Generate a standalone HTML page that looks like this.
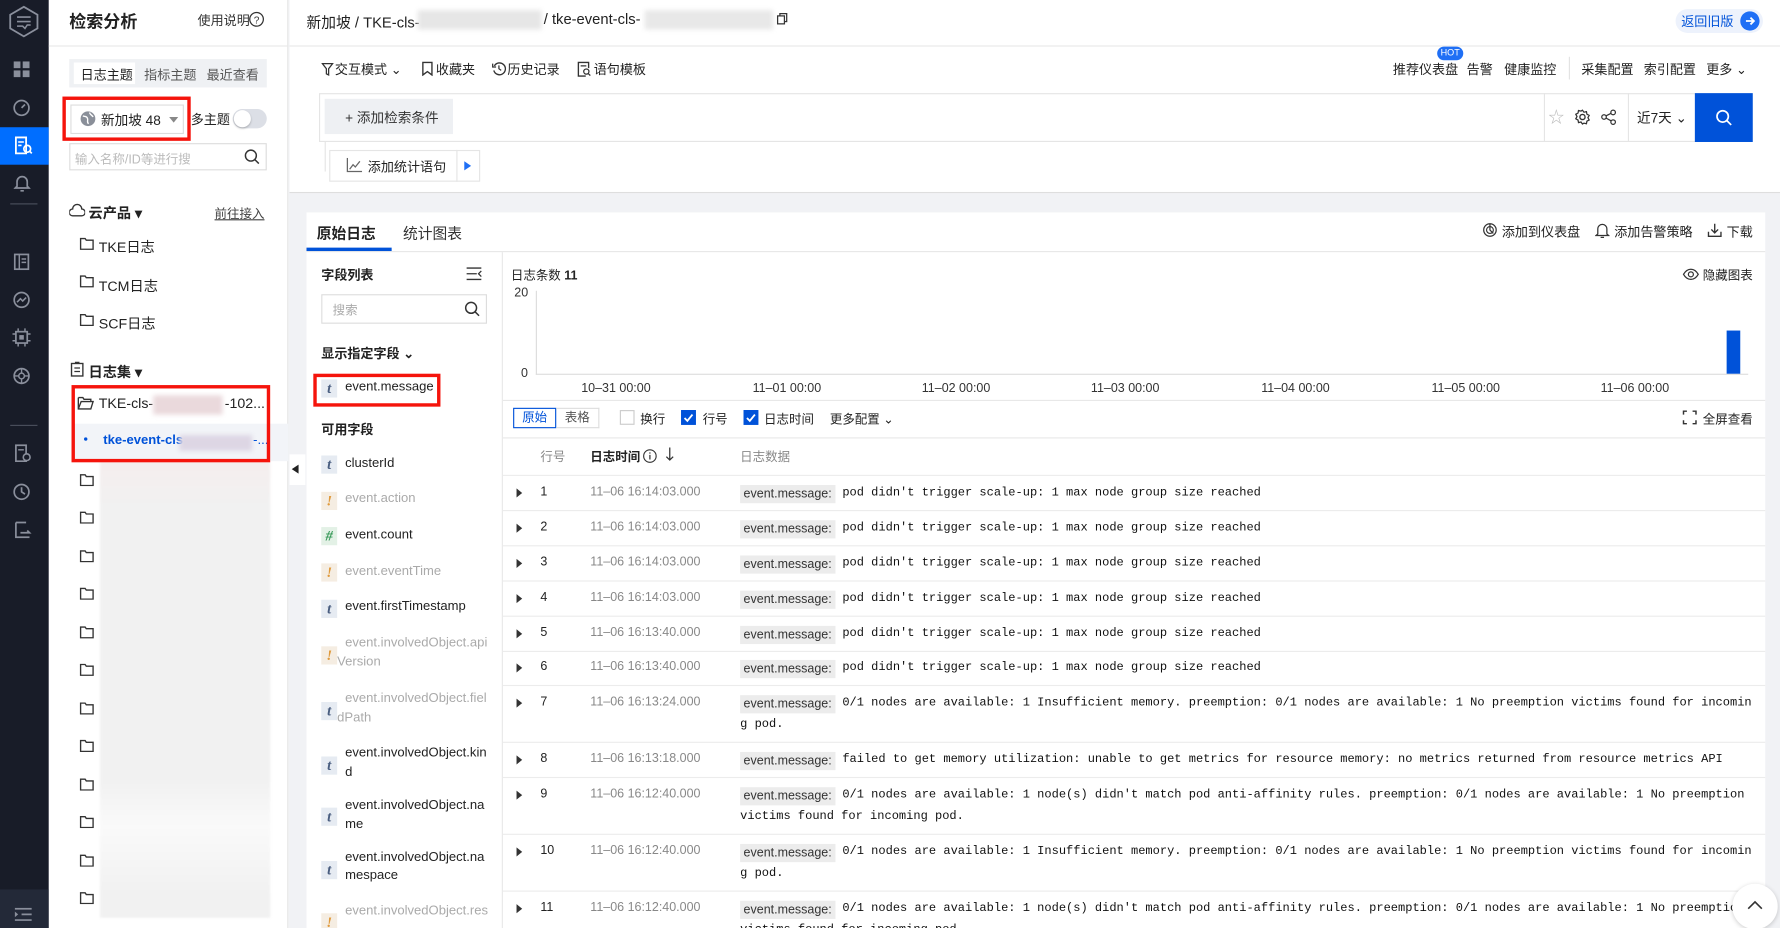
<!DOCTYPE html>
<html><head><meta charset="utf-8"><style>
*{box-sizing:border-box;margin:0;padding:0}
body{width:1780px;height:928px;overflow:hidden;background:#f1f2f5;font-family:"Liberation Sans","Noto Sans CJK SC",sans-serif;color:#222;font-size:12px}
#w{position:absolute;left:0;top:0;width:1568px;height:817px;transform:scale(1.1352,1.1359);transform-origin:0 0;background:#f1f2f5;overflow:hidden}
.a{position:absolute;white-space:nowrap}
.ic{position:absolute}
svg{display:block}
.nav{position:absolute;left:0;top:0;width:43px;height:817px;background:#181c28}
.side{position:absolute;left:43px;top:0;width:211px;height:817px;background:#fff;border-right:1px solid #e6e6e6}
.red{position:absolute;border:3px solid #f00f00;border-color:#f5140c}
.mono{font-family:"Liberation Mono",monospace;font-size:10.6px;color:#111}
.tag{position:absolute;background:#ececec;color:#333;font-size:11px;padding:1px 3px;line-height:14px}
.ft{position:absolute;width:14px;height:16px;background:#e6ebf2;color:#4a5e80;font-style:italic;font-weight:bold;font-family:"Liberation Serif",serif;font-size:13px;text-align:center;line-height:16px}
.row{position:absolute;left:443px;width:1112px;border-top:1px solid #ececec}
.tri{position:absolute;left:455px;width:0;height:0;border-left:5px solid #333;border-top:4px solid transparent;border-bottom:4px solid transparent}
.gray{color:#888}
.cb{position:absolute;width:13px;height:13px;border:1px solid #ccc;background:#fff}
.cb.on{background:#0052d9;border-color:#0052d9}
</style></head><body><div id="w">

<!-- NAV -->
<div class="nav">
 <svg class="ic" style="left:7px;top:4px" width="28" height="30" viewBox="0 0 28 30"><path d="M14 2L26 9V21L14 28L2 21V9Z" fill="none" stroke="#8a8f9c" stroke-width="1.6"/><path d="M8 11h12M8 15h12M8 19h5l2 2 2-3h3" stroke="#8a8f9c" stroke-width="1.4" fill="none"/></svg>
 <svg class="ic" style="left:12px;top:54px" width="14" height="14"><rect x="0" y="0" width="6" height="6" fill="#8a8f9c"/><rect x="8" y="0" width="6" height="6" fill="#8a8f9c"/><rect x="0" y="8" width="6" height="6" fill="#8a8f9c"/><rect x="8" y="8" width="6" height="6" fill="#8a8f9c"/></svg>
 <svg class="ic" style="left:11px;top:87px" width="16" height="16"><circle cx="8" cy="8" r="6.5" fill="none" stroke="#8a8f9c" stroke-width="1.5"/><path d="M8 8l3-3" stroke="#8a8f9c" stroke-width="1.5"/></svg>
 <div class="a" style="left:0;top:112px;width:43px;height:33px;background:#006eff"></div>
 <svg class="ic" style="left:12px;top:120px" width="18" height="17"><path d="M2 1h9v14H2z" fill="none" stroke="#fff" stroke-width="1.6"/><path d="M4 5h5M4 8h3" stroke="#fff" stroke-width="1.4"/><circle cx="12" cy="11" r="3" fill="none" stroke="#fff" stroke-width="1.5"/><path d="M14 13l2 2" stroke="#fff" stroke-width="1.5"/></svg>
 <svg class="ic" style="left:12px;top:153px" width="15" height="16"><path d="M3 11V7a4.5 4.5 0 019 0v4l1.5 1.5h-12z" fill="none" stroke="#8a8f9c" stroke-width="1.5"/><path d="M6 15h3" stroke="#8a8f9c" stroke-width="1.5"/></svg>
 <div class="a" style="left:9px;top:179px;width:24px;height:1px;background:#4a4f5c"></div>
 <svg class="ic" style="left:12px;top:223px" width="14" height="15"><rect x="1" y="1" width="12" height="13" fill="none" stroke="#8a8f9c" stroke-width="1.5"/><path d="M5 1v13M7 5h4M7 8h4" stroke="#8a8f9c" stroke-width="1.3"/></svg>
 <svg class="ic" style="left:11px;top:256px" width="16" height="16"><circle cx="8" cy="8" r="6.5" fill="none" stroke="#8a8f9c" stroke-width="1.5"/><path d="M4 10l3-3 2 2 3-3" stroke="#8a8f9c" stroke-width="1.4" fill="none"/></svg>
 <svg class="ic" style="left:11px;top:289px" width="16" height="16"><rect x="3" y="3" width="10" height="10" fill="none" stroke="#8a8f9c" stroke-width="1.5"/><rect x="6" y="6" width="4" height="4" fill="#8a8f9c"/><path d="M5 0v3M11 0v3M5 13v3M11 13v3M0 5h3M0 11h3M13 5h3M13 11h3" stroke="#8a8f9c" stroke-width="1.3"/></svg>
 <svg class="ic" style="left:11px;top:323px" width="16" height="16"><circle cx="8" cy="8" r="6.5" fill="none" stroke="#8a8f9c" stroke-width="1.5"/><circle cx="8" cy="8" r="2.5" fill="none" stroke="#8a8f9c" stroke-width="1.3"/><path d="M8 1.5v4M8 10.5v4M1.5 8h4M10.5 8h4" stroke="#8a8f9c" stroke-width="1.2"/></svg>
 <div class="a" style="left:9px;top:374px;width:24px;height:1px;background:#4a4f5c"></div>
 <svg class="ic" style="left:12px;top:391px" width="16" height="16"><path d="M2 1h9v14H2z" fill="none" stroke="#8a8f9c" stroke-width="1.5"/><path d="M4 5h5" stroke="#8a8f9c" stroke-width="1.3"/><circle cx="11.5" cy="11.5" r="3" fill="#181c28" stroke="#8a8f9c" stroke-width="1.4"/></svg>
 <svg class="ic" style="left:11px;top:425px" width="16" height="16"><circle cx="8" cy="8" r="6.5" fill="none" stroke="#8a8f9c" stroke-width="1.5"/><path d="M8 4v4l3 2" stroke="#8a8f9c" stroke-width="1.5" fill="none"/></svg>
 <svg class="ic" style="left:12px;top:459px" width="16" height="15"><path d="M2 1h9M2 1v13h12M6 10h8l-2-2" fill="none" stroke="#8a8f9c" stroke-width="1.5"/></svg>
 <div class="a" style="left:0;top:783px;width:43px;height:34px;background:#232938"></div>
 <svg class="ic" style="left:13px;top:799px" width="15" height="12"><path d="M0 1h15M6 6h9M0 11h15" stroke="#8a8f9c" stroke-width="1.5"/><path d="M0 3.5l3 2.5-3 2.5z" fill="#8a8f9c"/></svg>
</div>

<!-- SIDEBAR -->
<div class="side">
 <div class="a" style="left:18px;top:8px;font-size:15px;font-weight:bold">检索分析</div>
 <div class="a" style="left:131px;top:10px;font-size:11.5px;color:#333">使用说明</div>
 <svg class="ic" style="left:176px;top:10px" width="14" height="14"><circle cx="7" cy="7" r="6" fill="none" stroke="#333" stroke-width="1.1"/><text x="7" y="10.5" font-size="9" text-anchor="middle" fill="#333" font-family="Liberation Sans">?</text></svg>
 <div class="a" style="left:0;top:40px;width:211px;height:1px;background:#e8e8e8"></div>
 <div class="a" style="left:18px;top:52px;width:174px;height:25px;background:#eff1f4"></div>
 <div class="a" style="left:22px;top:55px;width:54px;height:19px;background:#fff"></div>
 <div class="a" style="left:28px;top:58px;font-size:11.5px">日志主题</div>
 <div class="a" style="left:84px;top:58px;font-size:11.5px;color:#555">指标主题</div>
 <div class="a" style="left:139px;top:58px;font-size:11.5px;color:#555">最近查看</div>
 <div class="a" style="left:19px;top:92px;width:100px;height:26px;border:1px solid #ddd"></div>
 <svg class="ic" style="left:27px;top:97px" width="15" height="15"><circle cx="7.5" cy="7.5" r="6.5" fill="#8a8f99"/><path d="M3 5c2 1 3 0 4 2s-1 3 1 5M9 2c0 2 2 2 3 4" stroke="#fff" stroke-width="1.2" fill="none"/></svg>
 <div class="a" style="left:46px;top:97px;font-size:12px">新加坡 48</div>
 <div class="a" style="left:106px;top:103px;border-top:5px solid #888;border-left:4px solid transparent;border-right:4px solid transparent"></div>
 <div class="a" style="left:125px;top:97px;font-size:11.5px">多主题</div>
 <div class="a" style="left:162px;top:96px;width:30px;height:17px;border-radius:9px;background:#dcdfe6"></div>
 <div class="a" style="left:163px;top:97px;width:15px;height:15px;border-radius:8px;background:#fff;box-shadow:0 1px 2px rgba(0,0,0,.25)"></div>
 <div class="a" style="left:18px;top:126px;width:174px;height:24px;border:1px solid #ddd"></div>
 <div class="a" style="left:23px;top:132px;font-size:11px;color:#bbb">输入名称/ID等进行搜</div>
 <svg class="ic" style="left:172px;top:131px" width="14" height="14"><circle cx="6" cy="6" r="4.8" fill="none" stroke="#333" stroke-width="1.3"/><path d="M9.5 9.5l3.5 3.5" stroke="#333" stroke-width="1.3"/></svg>
 <svg class="ic" style="left:18px;top:179px" width="14" height="12"><path d="M3 11h8a3 3 0 000-6 4 4 0 00-8 0 3 3 0 000 6z" fill="none" stroke="#333" stroke-width="1.2"/></svg>
 <div class="a" style="left:35px;top:177px;font-size:12.5px;font-weight:bold">云产品 ▾</div>
 <div class="a" style="left:146px;top:180px;font-size:11px;color:#444;text-decoration:underline">前往接入</div>
 <svg class="ic" style="left:27px;top:209px" width="13" height="11"><path d="M1 1h4l1 1.5h6v8H1z" fill="none" stroke="#333" stroke-width="1.2"/></svg>
 <div class="a" style="left:44px;top:207px;font-size:12.5px">TKE日志</div>
 <svg class="ic" style="left:27px;top:242px" width="13" height="11"><path d="M1 1h4l1 1.5h6v8H1z" fill="none" stroke="#333" stroke-width="1.2"/></svg>
 <div class="a" style="left:44px;top:241px;font-size:12.5px">TCM日志</div>
 <svg class="ic" style="left:27px;top:276px" width="13" height="11"><path d="M1 1h4l1 1.5h6v8H1z" fill="none" stroke="#333" stroke-width="1.2"/></svg>
 <div class="a" style="left:44px;top:274px;font-size:12.5px">SCF日志</div>
 <svg class="ic" style="left:19px;top:318px" width="12" height="14"><rect x="1" y="2" width="10" height="11" fill="none" stroke="#333" stroke-width="1.2"/><path d="M4 1h4M3.5 6h5M3.5 9h5" stroke="#333" stroke-width="1.1"/></svg>
 <div class="a" style="left:35px;top:317px;font-size:12.5px;font-weight:bold">日志集 ▾</div>
 <div class="a" style="left:21px;top:373px;width:190px;height:33px;background:#f2f4f8"></div>
 <svg class="ic" style="left:25px;top:349px" width="15" height="12"><path d="M1 1h4l1 1.5h6v2M1 1v10h11l2-6.5H3.5L1 11" fill="none" stroke="#333" stroke-width="1.2"/></svg>
 <div class="a" style="left:44px;top:348px;font-size:12.5px">TKE-cls-</div>
 <div class="a" style="left:92px;top:348px;width:61px;height:17px;background:#ead9dc;filter:blur(2px)"></div>
 <div class="a" style="left:155px;top:348px;font-size:12.5px">-102...</div>
 <div class="a" style="left:31px;top:385px;width:3px;height:3px;border-radius:2px;background:#0052d9"></div>
 <div class="a" style="left:48px;top:382px;font-size:11.5px;color:#0052d9;font-weight:bold">tke-event-cls</div>
 <div class="a" style="left:115px;top:383px;width:64px;height:14px;background:#ddd6e4;filter:blur(2px)"></div>
 <div class="a" style="left:180px;top:382px;font-size:11.5px;color:#0052d9">-...</div>
 <div class="a" style="left:20px;top:337px;width:175px;height:69px" ></div>
 <div class="a" style="left:45px;top:406px;width:150px;height:402px;background:linear-gradient(#f5eeee,#f1f1f1 10%,#f1f1f1 70%,#fafafa 80%,#f1f1f1 95%);filter:blur(1px)"></div>
 <svg class="ic" style="left:27px;top:417px" width="13" height="11"><path d="M1 1h4l1 1.5h6v8H1z" fill="none" stroke="#333" stroke-width="1.2"/></svg>
 <svg class="ic" style="left:27px;top:450px" width="13" height="11"><path d="M1 1h4l1 1.5h6v8H1z" fill="none" stroke="#333" stroke-width="1.2"/></svg>
 <svg class="ic" style="left:27px;top:484px" width="13" height="11"><path d="M1 1h4l1 1.5h6v8H1z" fill="none" stroke="#333" stroke-width="1.2"/></svg>
 <svg class="ic" style="left:27px;top:517px" width="13" height="11"><path d="M1 1h4l1 1.5h6v8H1z" fill="none" stroke="#333" stroke-width="1.2"/></svg>
 <svg class="ic" style="left:27px;top:551px" width="13" height="11"><path d="M1 1h4l1 1.5h6v8H1z" fill="none" stroke="#333" stroke-width="1.2"/></svg>
 <svg class="ic" style="left:27px;top:584px" width="13" height="11"><path d="M1 1h4l1 1.5h6v8H1z" fill="none" stroke="#333" stroke-width="1.2"/></svg>
 <svg class="ic" style="left:27px;top:618px" width="13" height="11"><path d="M1 1h4l1 1.5h6v8H1z" fill="none" stroke="#333" stroke-width="1.2"/></svg>
 <svg class="ic" style="left:27px;top:651px" width="13" height="11"><path d="M1 1h4l1 1.5h6v8H1z" fill="none" stroke="#333" stroke-width="1.2"/></svg>
 <svg class="ic" style="left:27px;top:685px" width="13" height="11"><path d="M1 1h4l1 1.5h6v8H1z" fill="none" stroke="#333" stroke-width="1.2"/></svg>
 <svg class="ic" style="left:27px;top:718px" width="13" height="11"><path d="M1 1h4l1 1.5h6v8H1z" fill="none" stroke="#333" stroke-width="1.2"/></svg>
 <svg class="ic" style="left:27px;top:752px" width="13" height="11"><path d="M1 1h4l1 1.5h6v8H1z" fill="none" stroke="#333" stroke-width="1.2"/></svg>
 <svg class="ic" style="left:27px;top:785px" width="13" height="11"><path d="M1 1h4l1 1.5h6v8H1z" fill="none" stroke="#333" stroke-width="1.2"/></svg>
</div>
<div class="red" style="left:55px;top:85px;width:113px;height:39px"></div>
<div class="red" style="left:63px;top:339px;width:175px;height:68px"></div>
<div class="a" style="left:255px;top:400px;width:14px;height:27px;background:#fff"></div>
<div class="a" style="left:257px;top:409px;border-right:6px solid #222;border-top:4px solid transparent;border-bottom:4px solid transparent"></div>

<!-- HEADER -->
<div class="a" style="left:255px;top:0;width:1313px;height:170px;background:#fff"></div>
<div class="a" style="left:255px;top:40px;width:1313px;height:1px;background:#e8e8e8"></div>
<div class="a" style="left:270px;top:9px;font-size:13px">新加坡 / TKE-cls-</div>
<div class="a" style="left:368px;top:9px;width:109px;height:17px;background:#e6e6e6;filter:blur(2px)"></div>
<div class="a" style="left:479px;top:9px;font-size:13px">/ tke-event-cls-</div>
<div class="a" style="left:568px;top:9px;width:113px;height:17px;background:#e8e8e8;filter:blur(2px)"></div>
<svg class="ic" style="left:684px;top:11px" width="10" height="11"><rect x="3" y="1" width="6" height="7" fill="none" stroke="#333" stroke-width="1.1"/><rect x="1" y="3" width="6" height="7" fill="#fff" stroke="#333" stroke-width="1.1"/></svg>
<div class="a" style="left:1476px;top:8px;width:77px;height:21px;border-radius:11px;background:#edf2fc"></div>
<div class="a" style="left:1481px;top:11px;font-size:11.5px;color:#0052d9">返回旧版</div>
<div class="a" style="left:1533px;top:10px;width:17px;height:17px;border-radius:9px;background:#1f6ff5"></div>
<svg class="ic" style="left:1536px;top:13px" width="11" height="11"><path d="M2 5.5h7M6 2.5l3 3-3 3" stroke="#fff" stroke-width="1.6" fill="none"/></svg>

<svg class="ic" style="left:283px;top:55px" width="11" height="12"><path d="M1 1h9L6.5 5.5V11L4.5 10V5.5z" fill="none" stroke="#333" stroke-width="1.1"/></svg>
<div class="a" style="left:295px;top:53px;font-size:11.5px">交互模式 ⌄</div>
<svg class="ic" style="left:371px;top:54px" width="11" height="13"><path d="M1.5 1h8v11l-4-3-4 3z" fill="none" stroke="#333" stroke-width="1.2"/></svg>
<div class="a" style="left:384px;top:53px;font-size:11.5px">收藏夹</div>
<svg class="ic" style="left:433px;top:54px" width="13" height="13"><path d="M2.5 4a5.2 5.2 0 11-.5 4" fill="none" stroke="#333" stroke-width="1.2"/><path d="M1 2v3h3M6.5 3.5v3l2 1.5" stroke="#333" stroke-width="1.1" fill="none"/></svg>
<div class="a" style="left:447px;top:53px;font-size:11.5px">历史记录</div>
<svg class="ic" style="left:508px;top:54px" width="13" height="14"><path d="M8 13H1.5V1h9v5" fill="none" stroke="#333" stroke-width="1.2"/><path d="M3.5 4h5" stroke="#333" stroke-width="1.1"/><circle cx="8.5" cy="9" r="2.3" fill="none" stroke="#333" stroke-width="1.1"/><path d="M10 10.5l2 2" stroke="#333" stroke-width="1.1"/></svg>
<div class="a" style="left:523px;top:53px;font-size:11.5px">语句模板</div>

<div class="a" style="left:1266px;top:41px;width:23px;height:12px;border-radius:6px;background:#1f6ff5;color:#fff;font-size:8px;text-align:center;line-height:12px">HOT</div>
<div class="a" style="left:1227px;top:53px;font-size:11.5px">推荐仪表盘</div>
<div class="a" style="left:1292px;top:53px;font-size:11.5px">告警</div>
<div class="a" style="left:1325px;top:53px;font-size:11.5px">健康监控</div>
<div class="a" style="left:1382px;top:50px;width:1px;height:20px;background:#e3e3e3"></div>
<div class="a" style="left:1393px;top:53px;font-size:11.5px">采集配置</div>
<div class="a" style="left:1448px;top:53px;font-size:11.5px">索引配置</div>
<div class="a" style="left:1503px;top:53px;font-size:11.5px">更多 ⌄</div>

<div class="a" style="left:281px;top:82px;width:1263px;height:43px;border:1px solid #e5e5e5"></div>
<div class="a" style="left:286px;top:87px;width:113px;height:31px;background:#eef0f3"></div>
<div class="a" style="left:304px;top:95px;font-size:12px;color:#333">+ 添加检索条件</div>
<div class="a" style="left:1360px;top:82px;width:1px;height:43px;background:#e5e5e5"></div>
<div class="a" style="left:1364px;top:93px;font-size:14px;color:#bbb">☆</div>
<svg class="ic" style="left:1387px;top:96px" width="14" height="14"><circle cx="7" cy="7" r="2.3" fill="none" stroke="#333" stroke-width="1.2"/><path d="M7 1l1.3 1.8 2.2-.5.4 2.2 2 1.1-1.1 2 1.1 2-2 1.1-.4 2.2-2.2-.5L7 13.2 5.7 11.4l-2.2.5-.4-2.2-2-1.1 1.1-2-1.1-2 2-1.1.4-2.2 2.2.5z" fill="none" stroke="#333" stroke-width="1.1"/></svg>
<svg class="ic" style="left:1410px;top:96px" width="14" height="14"><circle cx="11" cy="3" r="2" fill="none" stroke="#333" stroke-width="1.1"/><circle cx="3" cy="7" r="2" fill="none" stroke="#333" stroke-width="1.1"/><circle cx="11" cy="11.5" r="2" fill="none" stroke="#333" stroke-width="1.1"/><path d="M4.8 6l4.4-2.2M4.8 8l4.4 2.4" stroke="#333" stroke-width="1.1"/></svg>
<div class="a" style="left:1434px;top:82px;width:1px;height:43px;background:#e5e5e5"></div>
<div class="a" style="left:1442px;top:95px;font-size:12px">近7天 ⌄</div>
<div class="a" style="left:1493px;top:82px;width:51px;height:43px;background:#0052d9"></div>
<svg class="ic" style="left:1511px;top:96px" width="15" height="15"><circle cx="6.5" cy="6.5" r="5" fill="none" stroke="#fff" stroke-width="1.5"/><path d="M10 10l4 4" stroke="#fff" stroke-width="1.5"/></svg>

<div class="a" style="left:286px;top:125px;width:1px;height:26px;background:#e5e5e5"></div>
<div class="a" style="left:290px;top:132px;width:133px;height:28px;border:1px solid #e5e5e5"></div>
<div class="a" style="left:402px;top:132px;width:1px;height:28px;background:#e5e5e5"></div>
<svg class="ic" style="left:305px;top:139px" width="14" height="13"><path d="M1 0v12h13" stroke="#666" stroke-width="1.1" fill="none"/><path d="M3 10l3-4 2 2 4-5" stroke="#666" stroke-width="1.1" fill="none"/></svg>
<div class="a" style="left:324px;top:139px;font-size:11.5px">添加统计语句</div>
<div class="a" style="left:409px;top:142px;border-left:6px solid #1f6ff5;border-top:4px solid transparent;border-bottom:4px solid transparent"></div>
<div class="a" style="left:255px;top:169px;width:1313px;height:1px;background:#dedede"></div>

<!-- CARD -->
<div class="a" style="left:270px;top:187px;width:1285px;height:640px;background:#fff"></div>
<div class="a" style="left:279px;top:195px;font-size:13px;font-weight:bold">原始日志</div>
<div class="a" style="left:355px;top:195px;font-size:13px;color:#333">统计图表</div>
<div class="a" style="left:270px;top:221px;width:1285px;height:1px;background:#e8e8e8"></div>
<div class="a" style="left:270px;top:218px;width:75px;height:3px;background:#0052d9"></div>
<svg class="ic" style="left:1306px;top:196px" width="13" height="13"><circle cx="6.5" cy="6.5" r="5.5" fill="none" stroke="#333" stroke-width="1.1"/><path d="M6.5 1v5.5l3 3" stroke="#333" stroke-width="1.1" fill="none"/><circle cx="6.5" cy="6.5" r="3" fill="none" stroke="#333" stroke-width="1"/></svg>
<div class="a" style="left:1323px;top:196px;font-size:11.5px">添加到仪表盘</div>
<svg class="ic" style="left:1405px;top:195px" width="13" height="15"><path d="M2.5 11V6.5a4 4 0 018 0V11l1.5 1.3H1z" fill="none" stroke="#333" stroke-width="1.1"/><path d="M5 14h3" stroke="#333" stroke-width="1.1"/></svg>
<div class="a" style="left:1422px;top:196px;font-size:11.5px">添加告警策略</div>
<svg class="ic" style="left:1504px;top:196px" width="13" height="13"><path d="M6.5 1v8M3.5 6l3 3 3-3M1 8v4h11V8" stroke="#333" stroke-width="1.2" fill="none"/></svg>
<div class="a" style="left:1521px;top:196px;font-size:11.5px">下载</div>

<!-- field panel -->
<div class="a" style="left:442px;top:222px;width:1px;height:600px;background:#e8e8e8"></div>
<div class="a" style="left:283px;top:234px;font-size:11.5px;font-weight:bold">字段列表</div>
<svg class="ic" style="left:411px;top:235px" width="14" height="12"><path d="M0 1h13M0 6h9M0 11h13" stroke="#333" stroke-width="1.2"/><path d="M13 3.5l-2.5 2.5 2.5 2.5" stroke="#333" stroke-width="1.1" fill="none"/></svg>
<div class="a" style="left:283px;top:259px;width:146px;height:26px;border:1px solid #ddd"></div>
<div class="a" style="left:293px;top:265px;font-size:11px;color:#aaa">搜索</div>
<svg class="ic" style="left:409px;top:265px" width="14" height="14"><circle cx="6" cy="6" r="4.8" fill="none" stroke="#333" stroke-width="1.3"/><path d="M9.5 9.5l3.5 3.5" stroke="#333" stroke-width="1.3"/></svg>
<div class="a" style="left:283px;top:303px;font-size:11.5px;font-weight:bold">显示指定字段 ⌄</div>
<div class="ft" style="left:283px;top:334px">t</div>
<div class="a" style="left:304px;top:335px;font-size:11.5px">event.message</div>
<div class="red" style="left:276px;top:329px;width:112px;height:29px"></div>
<div class="a" style="left:283px;top:370px;font-size:11.5px;font-weight:bold">可用字段</div>

<div class="ft" style="left:283px;top:401px">t</div><div class="a" style="left:304px;top:402px;font-size:11.5px">clusterId</div>
<div class="ft" style="left:283px;top:433px;background:#f5ede2;color:#e09a3c">!</div><div class="a gray" style="left:304px;top:433px;font-size:11.5px;color:#aaa">event.action</div>
<div class="ft" style="left:283px;top:464px;background:#e3f1e6;color:#3a9a5a">#</div><div class="a" style="left:304px;top:465px;font-size:11.5px">event.count</div>
<div class="ft" style="left:283px;top:496px;background:#f5ede2;color:#e09a3c">!</div><div class="a" style="left:304px;top:497px;font-size:11.5px;color:#aaa">event.eventTime</div>
<div class="ft" style="left:283px;top:528px">t</div><div class="a" style="left:304px;top:528px;font-size:11.5px">event.firstTimestamp</div>
<div class="ft" style="left:283px;top:569px;background:#f5ede2;color:#e09a3c">!</div><div class="a" style="left:304px;top:560px;font-size:11.5px;color:#aaa">event.involvedObject.api</div><div class="a" style="left:297px;top:577px;font-size:11.5px;color:#aaa">Version</div>
<div class="ft" style="left:283px;top:618px">t</div><div class="a" style="left:304px;top:609px;font-size:11.5px;color:#aaa">event.involvedObject.fiel</div><div class="a" style="left:297px;top:626px;font-size:11.5px;color:#aaa">dPath</div>
<div class="ft" style="left:283px;top:666px">t</div><div class="a" style="left:304px;top:657px;font-size:11.5px">event.involvedObject.kin</div><div class="a" style="left:304px;top:674px;font-size:11.5px">d</div>
<div class="ft" style="left:283px;top:711px">t</div><div class="a" style="left:304px;top:703px;font-size:11.5px">event.involvedObject.na</div><div class="a" style="left:304px;top:720px;font-size:11.5px">me</div>
<div class="ft" style="left:283px;top:758px">t</div><div class="a" style="left:304px;top:749px;font-size:11.5px">event.involvedObject.na</div><div class="a" style="left:304px;top:765px;font-size:11.5px">mespace</div>
<div class="ft" style="left:283px;top:804px;background:#f5ede2;color:#e09a3c">!</div><div class="a" style="left:304px;top:796px;font-size:11.5px;color:#aaa">event.involvedObject.res</div>

<!-- chart -->
<div class="a" style="left:450px;top:234px;font-size:11px">日志条数 <b>11</b></div>
<svg class="ic" style="left:1482px;top:236px" width="15" height="11"><path d="M1 5.5C3 2 5 1 7.5 1S12 2 14 5.5C12 9 10 10 7.5 10S3 9 1 5.5z" fill="none" stroke="#333" stroke-width="1.1"/><circle cx="7.5" cy="5.5" r="2.2" fill="none" stroke="#333" stroke-width="1.1"/></svg>
<div class="a" style="left:1500px;top:234px;font-size:11px">隐藏图表</div>
<div class="a" style="left:453px;top:252px;font-size:11px;color:#333">20</div>
<div class="a" style="left:459px;top:323px;font-size:11px;color:#333">0</div>
<div class="a" style="left:472px;top:256px;width:1px;height:74px;background:#ddd"></div>
<div class="a" style="left:472px;top:329px;width:1068px;height:1px;background:#ddd"></div>
<div class="a" style="left:1521px;top:291px;width:12px;height:38px;background:#0052d9"></div>
<div class="a" style="left:512px;top:336px;font-size:11px;color:#333">10–31 00:00</div>
<div class="a" style="left:663px;top:336px;font-size:11px;color:#333">11–01 00:00</div>
<div class="a" style="left:812px;top:336px;font-size:11px;color:#333">11–02 00:00</div>
<div class="a" style="left:961px;top:336px;font-size:11px;color:#333">11–03 00:00</div>
<div class="a" style="left:1111px;top:336px;font-size:11px;color:#333">11–04 00:00</div>
<div class="a" style="left:1261px;top:336px;font-size:11px;color:#333">11–05 00:00</div>
<div class="a" style="left:1410px;top:336px;font-size:11px;color:#333">11–06 00:00</div>
<div class="a" style="left:443px;top:352px;width:1112px;height:1px;background:#e8e8e8"></div>

<div class="a" style="left:452px;top:359px;width:38px;height:18px;border:1px solid #0052d9;color:#0052d9;font-size:11px;text-align:center;line-height:16px">原始</div>
<div class="a" style="left:490px;top:359px;width:38px;height:18px;border:1px solid #ddd;border-left:none;color:#555;font-size:11px;text-align:center;line-height:16px">表格</div>
<div class="cb" style="left:546px;top:361px"></div><div class="a" style="left:564px;top:361px;font-size:11px">换行</div>
<div class="cb on" style="left:600px;top:361px"></div><svg class="ic" style="left:602px;top:364px" width="9" height="8"><path d="M1 4l2.5 2.5L8 1" stroke="#fff" stroke-width="1.6" fill="none"/></svg><div class="a" style="left:619px;top:361px;font-size:11px">行号</div>
<div class="cb on" style="left:655px;top:361px"></div><svg class="ic" style="left:657px;top:364px" width="9" height="8"><path d="M1 4l2.5 2.5L8 1" stroke="#fff" stroke-width="1.6" fill="none"/></svg><div class="a" style="left:673px;top:361px;font-size:11px">日志时间</div>
<div class="a" style="left:731px;top:361px;font-size:11px">更多配置 ⌄</div>
<svg class="ic" style="left:1482px;top:361px" width="13" height="13"><path d="M1 4V1h3M9 1h3v3M12 9v3H9M4 12H1V9" stroke="#333" stroke-width="1.3" fill="none"/></svg>
<div class="a" style="left:1500px;top:361px;font-size:11px">全屏查看</div>
<div class="a" style="left:443px;top:385px;width:1112px;height:1px;background:#e8e8e8"></div>

<div class="a" style="left:476px;top:394px;font-size:11px;color:#888">行号</div>
<div class="a" style="left:520px;top:394px;font-size:11px;font-weight:bold">日志时间</div>
<svg class="ic" style="left:566px;top:395px" width="13" height="13"><circle cx="6.5" cy="6.5" r="5.5" fill="none" stroke="#333" stroke-width="1"/><path d="M6.5 5.5v4M6.5 3.3v1" stroke="#333" stroke-width="1.1"/></svg>
<svg class="ic" style="left:586px;top:394px" width="8" height="13"><path d="M4 0v11M1 8l3 3 3-3" stroke="#333" stroke-width="1.1" fill="none"/></svg>
<div class="a" style="left:652px;top:394px;font-size:11px;color:#888">日志数据</div>

<!-- rows -->
<div class="row" style="top:418px"></div>
<div class="tri" style="top:430px"></div><div class="a" style="left:476px;top:427px;font-size:11px">1</div><div class="a gray" style="left:520px;top:427px;font-size:11px">11–06 16:14:03.000</div><div class="tag" style="left:652px;top:427px">event.message:</div><div class="a mono" style="left:742px;top:428px">pod didn't trigger scale-up: 1 max node group size reached</div>
<div class="row" style="top:449px"></div>
<div class="tri" style="top:461px"></div><div class="a" style="left:476px;top:458px;font-size:11px">2</div><div class="a gray" style="left:520px;top:458px;font-size:11px">11–06 16:14:03.000</div><div class="tag" style="left:652px;top:458px">event.message:</div><div class="a mono" style="left:742px;top:459px">pod didn't trigger scale-up: 1 max node group size reached</div>
<div class="row" style="top:480px"></div>
<div class="tri" style="top:492px"></div><div class="a" style="left:476px;top:489px;font-size:11px">3</div><div class="a gray" style="left:520px;top:489px;font-size:11px">11–06 16:14:03.000</div><div class="tag" style="left:652px;top:489px">event.message:</div><div class="a mono" style="left:742px;top:490px">pod didn't trigger scale-up: 1 max node group size reached</div>
<div class="row" style="top:511px"></div>
<div class="tri" style="top:523px"></div><div class="a" style="left:476px;top:520px;font-size:11px">4</div><div class="a gray" style="left:520px;top:520px;font-size:11px">11–06 16:14:03.000</div><div class="tag" style="left:652px;top:520px">event.message:</div><div class="a mono" style="left:742px;top:521px">pod didn't trigger scale-up: 1 max node group size reached</div>
<div class="row" style="top:542px"></div>
<div class="tri" style="top:554px"></div><div class="a" style="left:476px;top:551px;font-size:11px">5</div><div class="a gray" style="left:520px;top:551px;font-size:11px">11–06 16:13:40.000</div><div class="tag" style="left:652px;top:551px">event.message:</div><div class="a mono" style="left:742px;top:552px">pod didn't trigger scale-up: 1 max node group size reached</div>
<div class="row" style="top:573px"></div>
<div class="tri" style="top:584px"></div><div class="a" style="left:476px;top:581px;font-size:11px">6</div><div class="a gray" style="left:520px;top:581px;font-size:11px">11–06 16:13:40.000</div><div class="tag" style="left:652px;top:581px">event.message:</div><div class="a mono" style="left:742px;top:582px">pod didn't trigger scale-up: 1 max node group size reached</div>
<div class="row" style="top:603px"></div>
<div class="tri" style="top:615px"></div><div class="a" style="left:476px;top:612px;font-size:11px">7</div><div class="a gray" style="left:520px;top:612px;font-size:11px">11–06 16:13:24.000</div><div class="tag" style="left:652px;top:612px">event.message:</div><div class="a mono" style="left:742px;top:613px">0/1 nodes are available: 1 Insufficient memory. preemption: 0/1 nodes are available: 1 No preemption victims found for incomin</div><div class="a mono" style="left:652px;top:632px">g pod.</div>
<div class="row" style="top:653px"></div>
<div class="tri" style="top:665px"></div><div class="a" style="left:476px;top:662px;font-size:11px">8</div><div class="a gray" style="left:520px;top:662px;font-size:11px">11–06 16:13:18.000</div><div class="tag" style="left:652px;top:662px">event.message:</div><div class="a mono" style="left:742px;top:663px">failed to get memory utilization: unable to get metrics for resource memory: no metrics returned from resource metrics API</div>
<div class="row" style="top:684px"></div>
<div class="tri" style="top:696px"></div><div class="a" style="left:476px;top:693px;font-size:11px">9</div><div class="a gray" style="left:520px;top:693px;font-size:11px">11–06 16:12:40.000</div><div class="tag" style="left:652px;top:693px">event.message:</div><div class="a mono" style="left:742px;top:694px">0/1 nodes are available: 1 node(s) didn't match pod anti-affinity rules. preemption: 0/1 nodes are available: 1 No preemption</div><div class="a mono" style="left:652px;top:713px">victims found for incoming pod.</div>
<div class="row" style="top:734px"></div>
<div class="tri" style="top:746px"></div><div class="a" style="left:476px;top:743px;font-size:11px">10</div><div class="a gray" style="left:520px;top:743px;font-size:11px">11–06 16:12:40.000</div><div class="tag" style="left:652px;top:743px">event.message:</div><div class="a mono" style="left:742px;top:744px">0/1 nodes are available: 1 Insufficient memory. preemption: 0/1 nodes are available: 1 No preemption victims found for incomin</div><div class="a mono" style="left:652px;top:763px">g pod.</div>
<div class="row" style="top:784px"></div>
<div class="tri" style="top:796px"></div><div class="a" style="left:476px;top:793px;font-size:11px">11</div><div class="a gray" style="left:520px;top:793px;font-size:11px">11–06 16:12:40.000</div><div class="tag" style="left:652px;top:793px">event.message:</div><div class="a mono" style="left:742px;top:794px">0/1 nodes are available: 1 node(s) didn't match pod anti-affinity rules. preemption: 0/1 nodes are available: 1 No preemptio</div>
<div class="a mono" style="left:652px;top:813px">victims found for incoming pod.</div>

<div class="a" style="left:1526px;top:778px;width:40px;height:40px;border-radius:20px;background:#fff;box-shadow:0 1px 4px rgba(0,0,0,.2)"></div>
<svg class="ic" style="left:1539px;top:792px" width="14" height="9"><path d="M1 8l6-6 6 6" stroke="#333" stroke-width="1.4" fill="none"/></svg>
</div></body></html>
